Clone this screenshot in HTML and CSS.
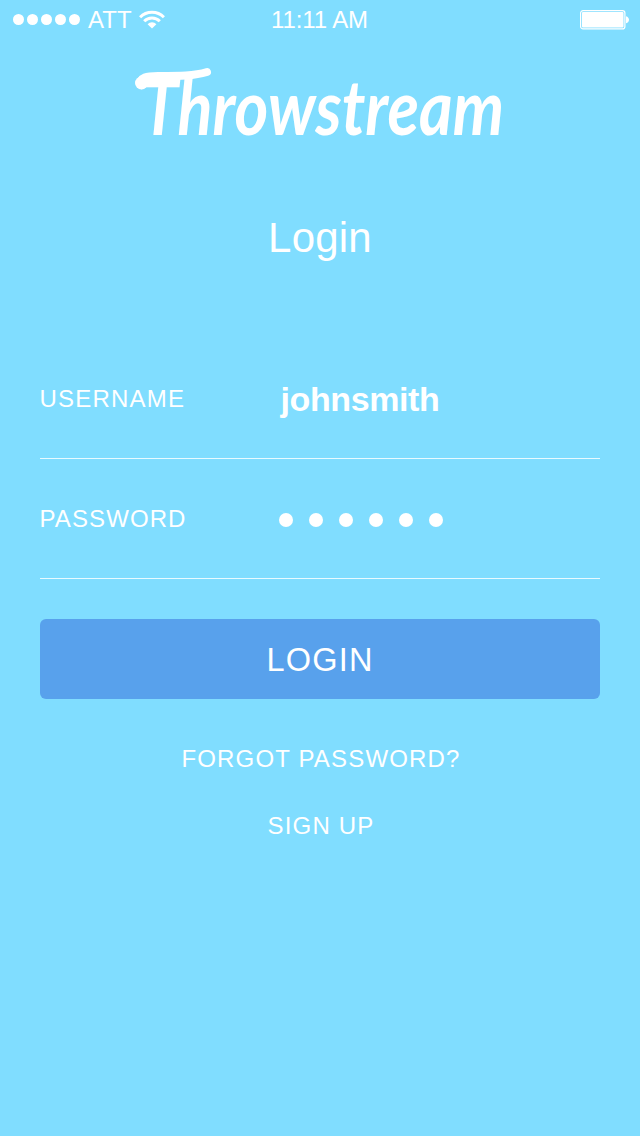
FILE: index.html
```html
<!DOCTYPE html>
<html lang="en">
<head>
<meta charset="utf-8">
<title>Throwstream</title>
<link rel="stylesheet" href="styles.css">
</head>
<body>
<div class="screen">
  <header class="status">
    <div class="carrier">
      <span class="signal"><i></i><i></i><i></i><i></i><i></i></span>
      <span class="network">ATT</span>
      <svg class="wifi" width="26" height="19" viewBox="0 0 26 19">
        <g fill="none" stroke="#fff" stroke-width="3">
          <path d="M1.1 7.2a16.7 16.7 0 0 1 23.8 0"/>
          <path d="M5.2 11.3a11 11 0 0 1 15.6 0"/>
        </g>
        <path fill="#fff" d="M8.6 14.2a6.2 6.2 0 0 1 8.8 0L13 18.6z"/>
      </svg>
    </div>
    <time class="clock">11:11 AM</time>
    <svg class="battery" width="49" height="20" viewBox="0 0 49 20">
      <rect x=".6" y=".6" width="44.3" height="18.3" rx="2.5" fill="none" stroke="#fff" stroke-width="1.2"/>
      <rect x="2" y="2" width="41.5" height="15.5" rx="1" fill="#fff"/>
      <path fill="#fff" d="M46 6.2c4 1 4 6 0 7z"/>
    </svg>
  </header>

  <h1 class="brand">
    <svg class="logo" width="384" height="110" viewBox="0 0 384 110">
      <!-- flourish above the wordmark -->
      <path class="flourish" d="M14 31C10 23 20 22 30 22C52 22 66 22 79 18"/>
      <circle cx="13.500" cy="29" r="6.500" fill="#fff"/>
      <text class="wordmark" x="14" y="81" textLength="362" lengthAdjust="spacingAndGlyphs">Throwstream</text>
    </svg>
  </h1>

  <h2 class="title">Login</h2>

  <form class="form">
    <div class="row"><span class="label user">USERNAME</span><span class="value">johnsmith</span></div>
    <div class="row"><span class="label">PASSWORD</span><span class="dots"><i></i><i></i><i></i><i></i><i></i><i></i></span></div>
    <button class="submit" type="button">LOGIN</button>
  </form>

  <nav class="links">
    <a class="link forgot">FORGOT PASSWORD?</a>
    <a class="link">SIGN UP</a>
  </nav>
</div>
</body>
</html>
```
FILE: styles.css
```css
* { box-sizing: border-box; }
body {
  margin: 0;
  background: #80ddff;
  color: #fff;
  font-family: "Liberation Sans", Arial, sans-serif;
}
.screen { width: 640px; height: 1136px; overflow: hidden; background: #80ddff; }
.status {
  display: grid;
  grid-template-columns: 1fr 100px 1fr;
  align-items: center;
  height: 39px;
  padding: 0 11px 0 13px;
  font-size: 24px;
}
.carrier { display: flex; align-items: center; }
.signal { display: flex; gap: 3px; margin-right: 8px; }
.signal i { width: 11px; height: 11px; border-radius: 50%; background: #fff; }
.network { margin-right: 7px; }
.clock { white-space: nowrap; text-align: center; letter-spacing: -.1px; margin-left: -3px; }
.battery { justify-self: end; }
.brand { display: flex; justify-content: center; height: 110px; margin: 15px 0 0; }
.logo { overflow: visible; }
.flourish { fill: none; stroke: #fff; stroke-width: 8; stroke-linecap: round; }
.wordmark { fill: #fff; font: italic 700 76px Lato, sans-serif; }
.title {
  margin: 44px 0 0;
  font-size: 42px;
  line-height: 60px;
  font-weight: 400;
  letter-spacing: .2px;
  text-align: center;
}
.form { margin: 71px 40px 0; }
.row {
  display: grid;
  grid-template-columns: 239px 1fr;
  align-items: center;
  height: 120px;
  border-bottom: 1px solid #e8faff;
}
.label { margin-left: -.5px; font-size: 24px; letter-spacing: 1.1px; }
.user { letter-spacing: 1.2px; }
.value { padding: 2px 0 0 1.5px; font-size: 34px; font-weight: 700; letter-spacing: -.4px; }
.dots { display: flex; gap: 16px; padding-top: 3px; }
.dots i { width: 14px; height: 14px; border-radius: 50%; background: #fff; }
.submit {
  display: block;
  width: 560px;
  height: 80px;
  margin-top: 40px;
  padding: 2px 0 0;
  border: 0;
  border-radius: 6px;
  background: #58a1ec;
  color: #fff;
  font: 32.500px "Liberation Sans", Arial, sans-serif;
  letter-spacing: 1.2px;
}
.links {
  display: flex;
  flex-direction: column;
  align-items: center;
  gap: 27px;
  margin-top: 40px;
}
.link { padding-left: 2px; font-size: 24px; line-height: 40px; letter-spacing: 1.2px; }
.forgot { letter-spacing: 1.17px; }
```
